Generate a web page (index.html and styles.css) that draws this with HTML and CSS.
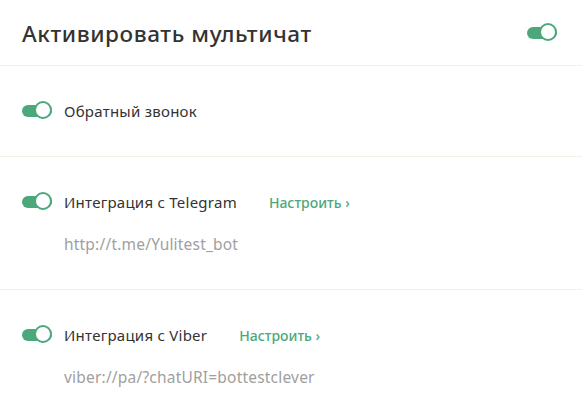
FILE: index.html
```html
<!DOCTYPE html>
<html lang="ru">
<head>
  <meta charset="UTF-8" />
  <meta name="viewport" content="width=device-width, initial-scale=1.0" />
  <title>Мультичат</title>
  <link rel="stylesheet" href="styles.css">
</head>
<body>

  <div class="panel">
    <!-- Заголовок -->
    <div class="panel-head">
      <h1>Активировать мультичат</h1>
      <span class="switch"></span>
    </div>

    <!-- Каналы -->
    <div class="row">
      <div class="row-line">
        <span class="switch"></span>
        <span class="label">Обратный звонок</span>
      </div>
    </div>

    <div class="row">
      <div class="row-line">
        <span class="switch"></span>
        <span class="label">Интеграция с Telegram</span>
        <a class="setup" href="#">Настроить ›</a>
      </div>
      <div class="link">http://t.me/Yulitest_bot</div>
    </div>

    <div class="row">
      <div class="row-line">
        <span class="switch"></span>
        <span class="label">Интеграция с Viber</span>
        <a class="setup" href="#">Настроить ›</a>
      </div>
      <div class="link">viber://pa/?chatURI=bottestclever</div>
    </div>
  </div>

</body>
</html>
```

FILE: styles.css
```css
body {
  margin: 0;
  background: #fff;
  font-family: 'Noto Sans', 'Open Sans', sans-serif;
  color: #333;
}

.panel {
  width: 582px;
}

/* Шапка */
.panel-head {
  display: flex;
  align-items: center;
  justify-content: space-between;
  height: 66px;
  padding: 0 25px 0 22px;
  border-bottom: 1px solid #f5efe2;
  box-sizing: border-box;
}

.panel-head h1 {
  margin: 2px 0 0;
  font-size: 22.5px;
  font-weight: 500;
  letter-spacing: 0.6px;
  color: #333;
}

/* Строки */
.row {
  padding: 35px 22px 35px;
  border-bottom: 1px solid #f3f1e6;
}

.row:last-child {
  border-bottom: none;
}

.row-line {
  display: flex;
  align-items: center;
  height: 20px;
}

.label {
  margin-left: 12px;
  font-size: 15px;
  letter-spacing: 0.25px;
  color: #333;
}

.setup {
  margin-left: 32px;
  font-size: 14px;
  font-weight: 500;
  color: #4ca87a;
  text-decoration: none;
}

.link {
  margin: 22px 0 0 42px;
  height: 20px;
  line-height: 20px;
  font-size: 15.5px;
  letter-spacing: 0.2px;
  color: #a0a0a0;
}

/* Переключатель */
.switch {
  position: relative;
  display: inline-block;
  width: 30px;
  height: 12px;
  border-radius: 6px;
  background: #4ca87a;
  flex-shrink: 0;
}

.switch::after {
  content: '';
  position: absolute;
  right: 0;
  top: -4px;
  width: 14px;
  height: 14px;
  border: 2px solid #4ca87a;
  border-radius: 50%;
  background: #fff;
  box-sizing: content-box;
}
```
